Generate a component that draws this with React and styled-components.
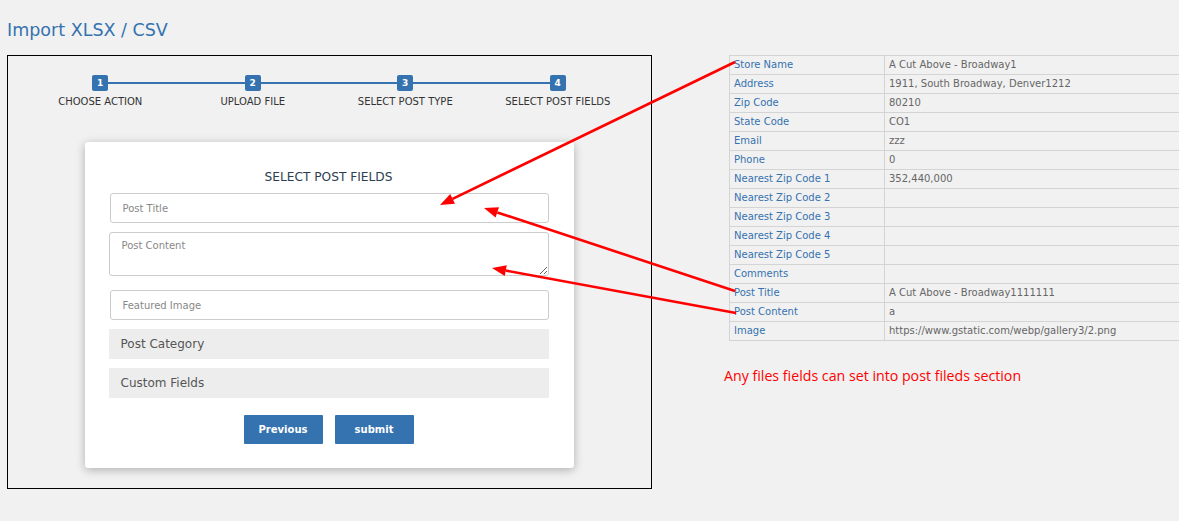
import React from "react";
import styled, { createGlobalStyle } from "styled-components";

const Global = createGlobalStyle`
  html, body { margin: 0; padding: 0; background: #f1f1f1; overflow: hidden; }
  body { font-family: "DejaVu Sans", "Noto Sans", sans-serif; }
  * { box-sizing: border-box; }
`;

const Page = styled.div`
  position: relative;
  width: 1179px;
  height: 521px;
  padding: 17px 0 0 7px;
`;

const Title = styled.h1`
  margin: 0;
  height: 26px;
  font-size: 17.5px;
  font-weight: 400;
  color: #3572b0;
  line-height: 26px;
`;

const Content = styled.div`
  display: flex;
  align-items: flex-start;
  margin-top: 12px;
  gap: 77px;
`;

const Panel = styled.div`
  flex: none;
  width: 645px;
  height: 434px;
  border: 1px solid #000;
  padding: 19px 17px 0 16px;
`;

const Stepper = styled.div`
  position: relative;
  display: grid;
  grid-template-columns: repeat(4, 1fr);
`;

const StepLine = styled.div`
  position: absolute;
  top: 7px;
  left: 12.5%;
  right: 12.5%;
  height: 2px;
  background: #3572b0;
`;

const Step = styled.div`
  position: relative;
  display: flex;
  flex-direction: column;
  align-items: center;
  gap: 4px;
`;

const StepNum = styled.div`
  width: 16px;
  height: 16px;
  border-radius: 2px;
  background: #3572b0;
  color: #fff;
  font-size: 9px;
  font-weight: 700;
  display: flex;
  align-items: center;
  justify-content: center;
`;

const StepLabel = styled.div`
  font-size: 10px;
  color: #333;
  line-height: 13px;
  white-space: nowrap;
`;

const Card = styled.div`
  width: 489px;
  margin: 34px auto 0;
  background: #fff;
  border-radius: 3px;
  box-shadow: 0 2px 10px rgba(0, 0, 0, 0.28);
  padding: 27px 25px 24px 24px;
  display: flex;
  flex-direction: column;
  gap: 9px;
`;

const CardTitle = styled.div`
  text-align: center;
  font-size: 12.2px;
  color: #2c3e50;
  line-height: 16px;
  margin-bottom: -1px;
`;

const Field = styled.input`
  display: block;
  width: 439px;
  height: 30px;
  margin-left: ${(p) => (p.$shift ? "1px" : "0")};
  border: 1px solid #ccc;
  border-radius: 3px;
  padding: 0 12px;
  font-family: inherit;
  font-size: 10px;
  background: #fff;
  &::placeholder { color: #888; }
`;

const Area = styled.textarea`
  display: block;
  width: 440px;
  height: 44px;
  border: 1px solid #ccc;
  border-radius: 3px;
  padding: 7px 12px;
  font-family: inherit;
  font-size: 10px;
  resize: vertical;
  margin-bottom: 5px;
  &::placeholder { color: #888; }
`;

const Section = styled.div`
  width: 440px;
  height: 30px;
  background: #ededed;
  color: #555;
  font-size: 12px;
  line-height: 30px;
  padding-left: 12px;
`;

const Buttons = styled.div`
  display: flex;
  justify-content: center;
  gap: 12px;
  margin-top: 8px;
`;

const Button = styled.button`
  width: 79px;
  height: 29px;
  border: none;
  border-radius: 1px;
  background: #3572b0;
  color: #fff;
  font-family: inherit;
  font-size: 10px;
  font-weight: 700;
`;

const Side = styled.div`
  flex: none;
  display: flex;
  flex-direction: column;
`;

const Table = styled.table`
  width: 470px;
  border-collapse: collapse;
  font-size: 10px;
`;

const Cell = styled.td`
  height: 19px;
  padding: 0 4px 2px;
  border: 1px solid #d4d4d4;
  color: ${(p) => (p.$label ? "#3572b0" : "#666")};
  width: ${(p) => (p.$label ? "155px" : "auto")};
  white-space: nowrap;
  line-height: 15px;
`;

const Note = styled.div`
  margin-top: 25px;
  margin-left: -5px;
  font-family: "Open Sans", sans-serif;
  font-size: 14.2px;
  color: #f00;
`;

const Overlay = styled.svg`
  position: absolute;
  inset: 0;
  pointer-events: none;
`;

const rows = [
  ["Store Name", "A Cut Above - Broadway1"],
  ["Address", "1911, South Broadway, Denver1212"],
  ["Zip Code", "80210"],
  ["State Code", "CO1"],
  ["Email", "zzz"],
  ["Phone", "0"],
  ["Nearest Zip Code 1", "352,440,000"],
  ["Nearest Zip Code 2", ""],
  ["Nearest Zip Code 3", ""],
  ["Nearest Zip Code 4", ""],
  ["Nearest Zip Code 5", ""],
  ["Comments", ""],
  ["Post Title", "A Cut Above - Broadway1111111"],
  ["Post Content", "a"],
  ["Image", "https://www.gstatic.com/webp/gallery3/2.png"],
];

const steps = ["CHOOSE ACTION", "UPLOAD FILE", "SELECT POST TYPE", "SELECT POST FIELDS"];

const Arrow = ({ x1, y1, x2, y2 }) => {
  const a = Math.atan2(y2 - y1, x2 - x1);
  const L = 14, W = 5.5;
  const bx = x2 - L * Math.cos(a), by = y2 - L * Math.sin(a);
  const px = -Math.sin(a) * W, py = Math.cos(a) * W;
  return (
    <g>
      <line x1={x1} y1={y1} x2={bx} y2={by} stroke="#f00" strokeWidth="2.6" />
      <polygon points={`${x2},${y2} ${bx + px},${by + py} ${bx - px},${by - py}`} fill="#f00" />
    </g>
  );
};

export default function App() {
  return (
    <Page>
      <Global />
      <Title>Import XLSX / CSV</Title>
      <Content>
        <Panel>
          <Stepper>
            <StepLine />
            {steps.map((s, i) => (
              <Step key={s}>
                <StepNum>{i + 1}</StepNum>
                <StepLabel>{s}</StepLabel>
              </Step>
            ))}
          </Stepper>
          <Card>
            <CardTitle>SELECT POST FIELDS</CardTitle>
            <Field $shift placeholder="Post Title" />
            <Area placeholder="Post Content" />
            <Field $shift placeholder="Featured Image" />
            <Section>Post Category</Section>
            <Section>Custom Fields</Section>
            <Buttons>
              <Button>Previous</Button>
              <Button>submit</Button>
            </Buttons>
          </Card>
        </Panel>
        <Side>
          <Table>
            <tbody>
              {rows.map(([k, v]) => (
                <tr key={k}>
                  <Cell $label>{k}</Cell>
                  <Cell>{v}</Cell>
                </tr>
              ))}
            </tbody>
          </Table>
          <Note>Any files fields can set into post fileds section</Note>
        </Side>
      </Content>
      <Overlay width="1179" height="521">
        <Arrow x1={735} y1={62} x2={440} y2={205} />
        <Arrow x1={735} y1={291} x2={484} y2={208} />
        <Arrow x1={736} y1={313} x2={492} y2={268} />
      </Overlay>
    </Page>
  );
}
